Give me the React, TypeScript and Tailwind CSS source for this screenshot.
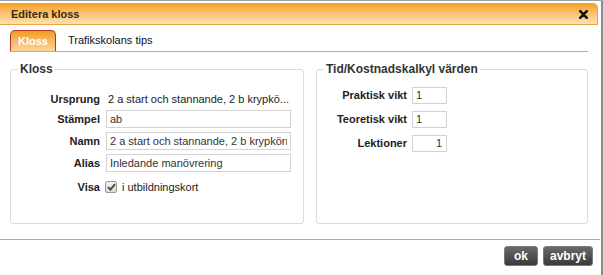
import React from "react";

function Row({ label, children, labelW, gap, className }: { label: string; children: React.ReactNode; labelW: string; gap: string; className?: string }) {
  return (
    <div className={`flex items-center ${gap} ${className ?? ""}`}>
      <div className={`${labelW} text-right font-bold text-[11px] text-[#222] leading-[18px]`}>{label}</div>
      {children}
    </div>
  );
}

export default function App() {
  return (
    <div className="w-[603px] h-[275px] bg-white overflow-hidden font-['Liberation_Sans',Arial,sans-serif] text-[11px] text-[#222]">
      <div className="h-px bg-[#a3a3a3]" />
      <div className="flex h-[274px]">
        <div className="w-[600px] flex flex-col pt-[2px]">
          {/* header */}
          <div className="h-[22px] mr-[2px] rounded-tr-[5px] border border-l-0 border-[#e8a546] bg-gradient-to-b from-[#f6a21c] to-[#fde2b0] flex items-center justify-between pl-[11px] pr-[9px]">
            <span className="font-bold text-[11px] text-[#3c2a0a]">Editera kloss</span>
            <svg width="9" height="9" viewBox="0 0 9 9">
              <path d="M1.2 1.2 L7.8 7.8 M7.8 1.2 L1.2 7.8" stroke="#111" strokeWidth="2.6" strokeLinecap="round" />
            </svg>
          </div>
          {/* tabs */}
          <div className="mt-[5px] ml-[10px] mr-[12px] flex items-end border-b border-[#f4a52a]">
            <div className="h-[21px] px-[7px] rounded-t-[5px] border border-b-0 border-[#b0342a] bg-gradient-to-b from-[#f29a16] to-[#fcd695] flex items-center font-bold text-white text-[11px]">
              Kloss
            </div>
            <div className="h-[21px] px-[12px] flex items-center text-[11px] text-[#111]">Trafikskolans tips</div>
          </div>
          {/* fieldsets */}
          <div className="flex gap-[12px] px-[10px] mt-[10px]">
            <fieldset className="w-[294px] h-[162px] border border-[#dcdcdc] rounded-[3px]">
              <legend className="ml-[7px] px-[2px] font-bold text-[12px] leading-[14px] text-[#333]">Kloss</legend>
              <div className="flex flex-col pt-[14px]">
                <Row label="Ursprung" labelW="w-[89px]" gap="gap-[6px]">
                  <span className="pl-[2px] leading-[18px] text-[#222]">2 a start och stannande, 2 b krypkö...</span>
                </Row>
                <Row label="Stämpel" labelW="w-[89px]" gap="gap-[6px]" className="mt-[2px]">
                  <input
                    defaultValue="ab"
                    className="w-[185px] h-[18px] border border-[#d3d3d3] px-[3px] text-[11px] text-[#333] outline-none font-['Liberation_Sans',Arial,sans-serif]"
                  />
                </Row>
                <Row label="Namn" labelW="w-[89px]" gap="gap-[6px]" className="mt-[4px]">
                  <input
                    defaultValue="2 a start och stannande, 2 b krypkörning"
                    className="w-[185px] h-[18px] border border-[#d3d3d3] px-[3px] text-[11px] text-[#333] outline-none font-['Liberation_Sans',Arial,sans-serif]"
                  />
                </Row>
                <Row label="Alias" labelW="w-[89px]" gap="gap-[6px]" className="mt-[4px]">
                  <input
                    defaultValue="Inledande manövrering"
                    className="w-[185px] h-[18px] border border-[#d3d3d3] px-[3px] text-[11px] text-[#333] outline-none font-['Liberation_Sans',Arial,sans-serif]"
                  />
                </Row>
                <Row label="Visa" labelW="w-[89px]" gap="gap-[5px]" className="mt-[6px]">
                  <span className="w-[12px] h-[12px] border border-[#9a9a9a] rounded-[2px] bg-gradient-to-b from-[#f4f4f4] to-[#d8d8d8] flex items-center justify-center">
                    <svg width="9" height="8" viewBox="0 0 9 8">
                      <path d="M1 4.2 L3.4 6.6 L8 1.2" stroke="#444" strokeWidth="1.9" fill="none" />
                    </svg>
                  </span>
                  <span className="leading-[18px] text-[#222]">i utbildningskort</span>
                </Row>
              </div>
            </fieldset>
            <fieldset className="w-[272px] h-[162px] border border-[#dcdcdc] rounded-[3px]">
              <legend className="ml-[7px] px-[2px] font-bold text-[12px] leading-[14px] text-[#333]">Tid/Kostnadskalkyl värden</legend>
              <div className="flex flex-col pt-[10px] gap-[6px]">
                <Row label="Praktisk vikt" labelW="w-[90px]" gap="gap-[5px]">
                  <input
                    defaultValue="1"
                    className="w-[35px] h-[17px] border border-[#d3d3d3] px-[3px] text-[11px] text-[#333] outline-none font-['Liberation_Sans',Arial,sans-serif]"
                  />
                </Row>
                <Row label="Teoretisk vikt" labelW="w-[90px]" gap="gap-[5px]">
                  <input
                    defaultValue="1"
                    className="w-[35px] h-[17px] border border-[#d3d3d3] px-[3px] text-[11px] text-[#333] outline-none font-['Liberation_Sans',Arial,sans-serif]"
                  />
                </Row>
                <Row label="Lektioner" labelW="w-[90px]" gap="gap-[5px]">
                  <input
                    defaultValue="1"
                    className="w-[35px] h-[17px] border border-[#d3d3d3] px-[4px] text-right text-[11px] text-[#333] outline-none font-['Liberation_Sans',Arial,sans-serif]"
                  />
                </Row>
              </div>
            </fieldset>
          </div>
          {/* divider */}
          <div className="mt-[15px] h-px bg-[#a8a8a8]" />
          {/* buttons */}
          <div className="mt-[6px] flex justify-end gap-[5px] pr-[7px]">
            <button className="w-[34px] h-[20px] rounded-[3px] border border-[#7a7a7a] bg-gradient-to-b from-[#6a6a6a] to-[#3a3a3a] text-white font-bold text-[12px] leading-none font-['Liberation_Sans',Arial,sans-serif]">
              ok
            </button>
            <button className="w-[50px] h-[20px] rounded-[3px] border border-[#7a7a7a] bg-gradient-to-b from-[#6a6a6a] to-[#3a3a3a] text-white font-bold text-[12px] leading-none font-['Liberation_Sans',Arial,sans-serif]">
              avbryt
            </button>
          </div>
        </div>
        <div className="w-px bg-white" />
        <div className="w-[2px] bg-[#8c8c8c]" />
      </div>
    </div>
  );
}
